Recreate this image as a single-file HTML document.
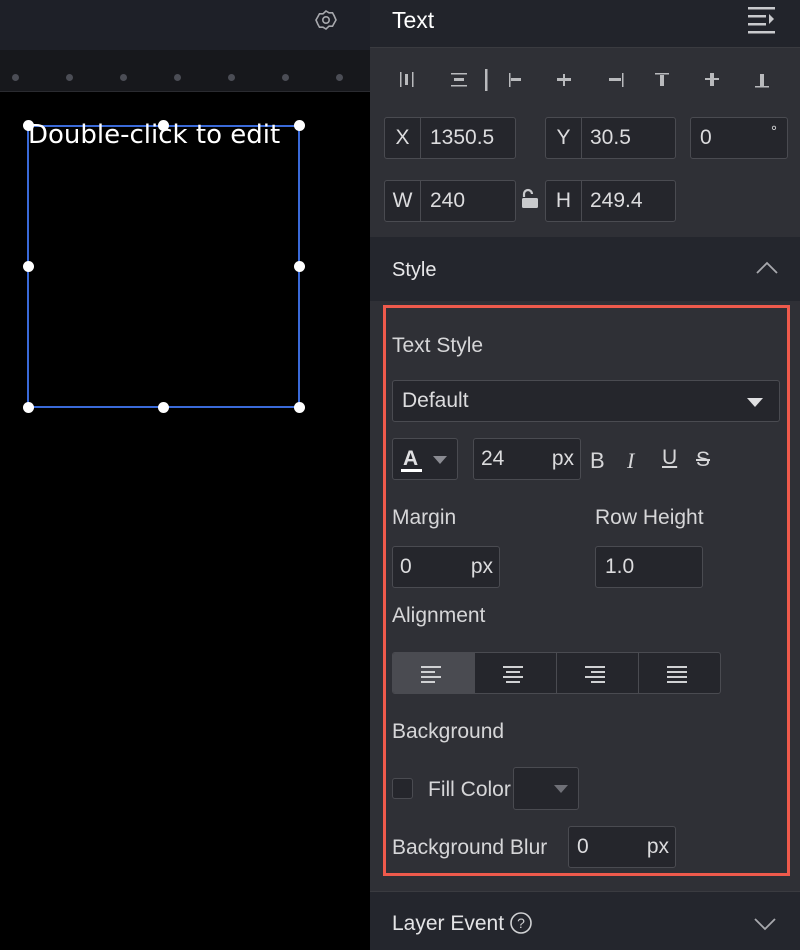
<!DOCTYPE html>
<html><head><meta charset="utf-8"><style>
*{box-sizing:border-box;margin:0;padding:0}
body{width:800px;height:950px;background:#000;font-family:"Liberation Sans",sans-serif;position:relative;overflow:hidden;color:#e4e4e6}
.a{position:absolute}
.inp{position:absolute;background:#25262c;border:1px solid #4a4b51;border-radius:3px;font-size:21px;color:#dcdcde;height:42px;line-height:40px}
.lab{position:absolute;font-size:21px;color:#d6d6d8}
.cell{position:absolute;top:0;bottom:0;border-right:1px solid #4a4b51;text-align:center}
.h{position:absolute;width:11px;height:11px;border-radius:50%;background:#fff}
.dot{position:absolute;top:74px;width:7px;height:7px;border-radius:50%;background:#4b4d55}
</style></head><body>
<div class="a" style="left:0;top:0;width:370px;height:50px;background:#1e2028"></div>
<svg class="a" style="left:315px;top:9px" width="22" height="22" viewBox="0 0 22 22" fill="none" stroke="#a8a9ae" stroke-width="1.6"><path d="M11 2l3 1.8 3.5 0 1.7 3.1L21 11l-1.8 3.1-1.7 3.1-3.5 0L11 20l-3-1.8-3.5 0-1.7-3.1L1 11l1.8-3.1 1.7-3.1 3.5 0z"/><circle cx="11" cy="11" r="3.2"/></svg>
<div class="a" style="left:0;top:50px;width:370px;height:42px;background:#17181c;border-bottom:1px solid #2a2b30"></div>
<div class="dot" style="left:12px"></div><div class="dot" style="left:66px"></div><div class="dot" style="left:120px"></div><div class="dot" style="left:174px"></div><div class="dot" style="left:228px"></div><div class="dot" style="left:282px"></div><div class="dot" style="left:336px"></div>
<div class="a" style="left:27px;top:125px;width:273px;height:283px;border:2px solid #3a6ad8"></div>
<div class="a" style="left:28px;top:120px;font-family:'DejaVu Sans',sans-serif;font-size:26px;color:#fff">Double-click to edit</div>
<div class="h" style="left:23px;top:120px"></div><div class="h" style="left:158px;top:120px"></div><div class="h" style="left:294px;top:120px"></div>
<div class="h" style="left:23px;top:261px"></div><div class="h" style="left:294px;top:261px"></div>
<div class="h" style="left:23px;top:402px"></div><div class="h" style="left:158px;top:402px"></div><div class="h" style="left:294px;top:402px"></div>
<div class="a" style="left:370px;top:0;width:430px;height:950px;background:#2f3036"></div>
<div class="a" style="left:370px;top:0;width:430px;height:48px;background:#22242b;border-bottom:1px solid #3a3b40"></div>
<div class="a" style="left:392px;top:7px;font-size:23px;color:#fff">Text</div>
<svg class="a" style="left:747px;top:7px" width="30" height="28"><g fill="#c9cacd"><rect x="1" y="0" width="27" height="2.5"/><rect x="1" y="8" width="18" height="2.5"/><rect x="1" y="16" width="18" height="2.5"/><rect x="1" y="24" width="27" height="2.5"/><path d="M22 7l5 5-5 5z"/></g></svg>
<svg class="a" style="left:398px;top:68px" width="372" height="24" fill="#b9babd">
<rect x="2" y="4" width="1.5" height="15"/><rect x="7" y="6" width="3" height="11"/><rect x="14" y="4" width="1.5" height="15"/>
<rect x="53" y="5" width="16" height="1.5"/><rect x="56" y="10" width="10" height="3"/><rect x="53" y="17" width="16" height="1.5"/>
<rect x="87" y="1" width="2.5" height="22"/>
<rect x="111" y="5" width="1.5" height="14"/><rect x="113" y="10" width="10" height="3"/>
<rect x="165" y="6" width="2" height="12"/><rect x="159" y="10" width="14" height="3"/>
<rect x="224" y="5" width="1.5" height="14"/><rect x="211" y="10" width="12" height="3"/>
<rect x="257" y="5" width="14" height="1.5"/><rect x="262" y="7" width="4" height="11"/>
<rect x="307" y="10" width="14" height="2"/><rect x="312" y="5" width="4" height="13"/>
<rect x="357" y="18" width="14" height="1.5"/><rect x="362" y="6" width="4" height="12"/>
</svg>
<div class="inp" style="left:384px;top:117px;width:132px"><div class="cell" style="left:0;width:36px">X</div><span style="position:absolute;left:45px">1350.5</span></div>
<div class="inp" style="left:545px;top:117px;width:131px"><div class="cell" style="left:0;width:36px">Y</div><span style="position:absolute;left:44px">30.5</span></div>
<div class="inp" style="left:690px;top:117px;width:98px"><span style="position:absolute;left:9px">0</span><span style="position:absolute;right:10px;top:-6px;font-size:15px">°</span></div>
<div class="inp" style="left:384px;top:180px;width:132px"><div class="cell" style="left:0;width:36px">W</div><span style="position:absolute;left:45px">240</span></div>
<svg class="a" style="left:520px;top:188px" width="20" height="22"><path d="M4 9V6a4 4 0 0 1 8 0" stroke="#c9cacd" stroke-width="2.2" fill="none"/><rect x="2" y="10" width="16" height="10" rx="1.5" fill="#c9cacd"/></svg>
<div class="inp" style="left:545px;top:180px;width:131px"><div class="cell" style="left:0;width:36px">H</div><span style="position:absolute;left:44px">249.4</span></div>
<div class="a" style="left:370px;top:237px;width:430px;height:64px;background:#24262d"></div>
<div class="a" style="left:392px;top:259px;font-size:20px;color:#e8e8ea">Style</div>
<svg class="a" style="left:756px;top:261px" width="22" height="14"><path d="M1 12l10-10 10 10" stroke="#a8a9ae" stroke-width="1.8" fill="none"/></svg>
<div class="a" style="left:383px;top:305px;width:407px;height:571px;border:3px solid #ee5a4c"></div>
<div class="lab" style="left:392px;top:334px">Text Style</div>
<div class="inp" style="left:392px;top:380px;width:388px"><span style="position:absolute;left:9px">Default</span><span style="position:absolute;right:16px;top:17px;border-left:8px solid transparent;border-right:8px solid transparent;border-top:9px solid #e0e0e2"></span></div>
<div class="inp" style="left:392px;top:438px;width:66px"><span style="position:absolute;left:10px;font-weight:bold;color:#e0e0e2">A</span><span style="position:absolute;left:8px;top:30px;width:21px;height:3px;background:#fff"></span><span style="position:absolute;left:40px;top:17px;border-left:7px solid transparent;border-right:7px solid transparent;border-top:8px solid #8a8b92"></span></div>
<div class="inp" style="left:473px;top:438px;width:108px"><span style="position:absolute;left:7px">24</span><span style="position:absolute;right:6px">px</span></div>
<div class="lab" style="left:590px;top:448px;font-size:22px">B</div>
<div class="lab" style="left:627px;top:448px;font-size:22px;font-style:italic;font-family:'Liberation Serif',serif">I</div>
<div class="lab" style="left:662px;top:446px;font-size:21px;text-decoration:underline">U</div>
<div class="lab" style="left:696px;top:448px;font-size:21px;text-decoration:line-through">S</div>
<div class="lab" style="left:392px;top:506px">Margin</div>
<div class="lab" style="left:595px;top:506px">Row Height</div>
<div class="inp" style="left:392px;top:546px;width:108px"><span style="position:absolute;left:7px">0</span><span style="position:absolute;right:6px">px</span></div>
<div class="inp" style="left:595px;top:546px;width:108px"><span style="position:absolute;left:9px">1.0</span></div>
<div class="lab" style="left:392px;top:604px">Alignment</div>
<div class="inp" style="left:392px;top:652px;width:329px;overflow:hidden">
<div class="cell" style="left:0;width:82px;background:#4a4b51"></div><div class="cell" style="left:82px;width:82px"></div><div class="cell" style="left:164px;width:82px"></div>
<svg style="position:absolute;left:0;top:0" width="329" height="42" fill="#d0d1d3">
<rect x="28" y="13" width="20" height="2"/><rect x="28" y="18" width="14" height="2"/><rect x="28" y="23" width="20" height="2"/><rect x="28" y="28" width="14" height="2"/>
<rect x="110" y="13" width="20" height="2"/><rect x="113" y="18" width="14" height="2"/><rect x="110" y="23" width="20" height="2"/><rect x="113" y="28" width="14" height="2"/>
<rect x="192" y="13" width="20" height="2"/><rect x="198" y="18" width="14" height="2"/><rect x="192" y="23" width="20" height="2"/><rect x="198" y="28" width="14" height="2"/>
<rect x="274" y="13" width="20" height="2"/><rect x="274" y="18" width="20" height="2"/><rect x="274" y="23" width="20" height="2"/><rect x="274" y="28" width="20" height="2"/>
</svg></div>
<div class="lab" style="left:392px;top:720px">Background</div>
<div class="a" style="left:392px;top:778px;width:21px;height:21px;border:1px solid #4a4b51;border-radius:3px;background:#25262c"></div>
<div class="lab" style="left:428px;top:778px">Fill Color</div>
<div class="inp" style="left:513px;top:767px;width:66px;height:43px"><span style="position:absolute;left:40px;top:17px;border-left:7px solid transparent;border-right:7px solid transparent;border-top:8px solid #6f7077"></span></div>
<div class="lab" style="left:392px;top:836px">Background Blur</div>
<div class="inp" style="left:568px;top:826px;width:108px"><span style="position:absolute;left:8px">0</span><span style="position:absolute;right:6px">px</span></div>
<div class="a" style="left:370px;top:891px;width:430px;height:59px;background:#24262d;border-top:1px solid #3a3b40"></div>
<div class="a" style="left:392px;top:912px;font-size:21px;color:#e4e4e6">Layer Event</div>
<svg class="a" style="left:510px;top:912px" width="24" height="24"><circle cx="11" cy="11" r="10" stroke="#d0d1d3" stroke-width="1.6" fill="none"/><text x="11" y="16" font-size="14" fill="#d0d1d3" text-anchor="middle" font-family="Liberation Sans">?</text></svg>
<svg class="a" style="left:754px;top:917px" width="22" height="14"><path d="M1 2l10 10 10-10" stroke="#a8a9ae" stroke-width="1.8" fill="none"/></svg>
</body></html>
